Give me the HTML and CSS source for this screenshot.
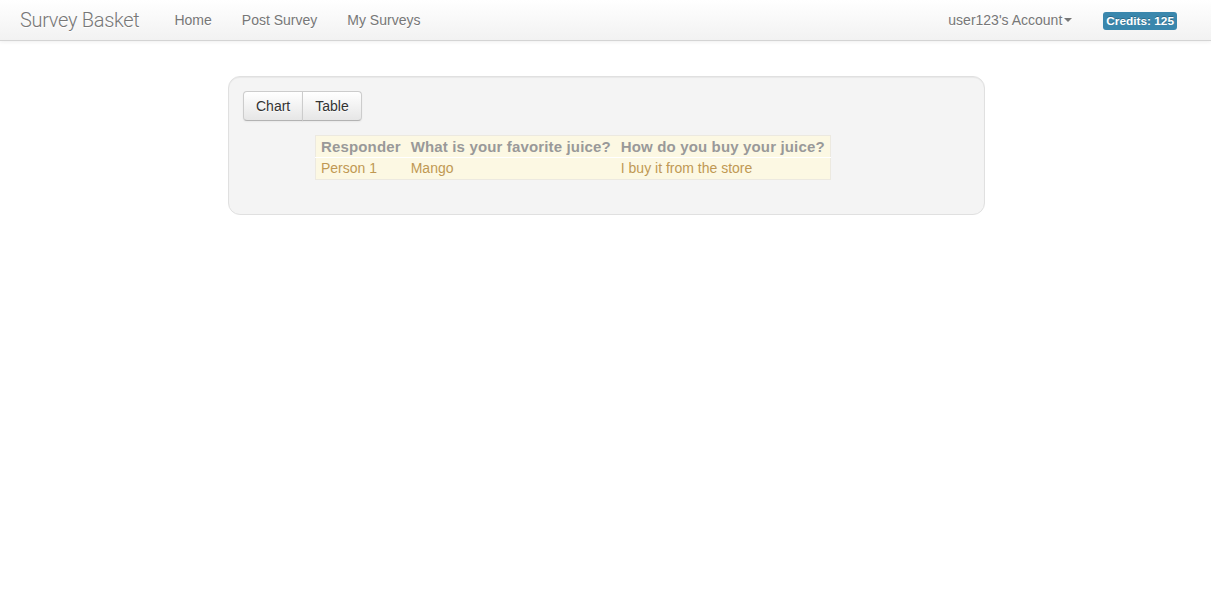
FILE: index.html
```html
<!DOCTYPE html>
<html>
<head>
<meta charset="utf-8">
<title>Survey Basket</title>
<link rel="stylesheet" href="styles.css">
</head>
<body>
<div class="navbar">
  <a class="brand" href="#">Survey Basket</a>
  <ul class="nav">
    <li><a href="#">Home</a></li>
    <li><a href="#">Post Survey</a></li>
    <li><a href="#">My Surveys</a></li>
  </ul>
  <ul class="nav nav-right">
    <li><a href="#">user123's Account<b class="caret"></b></a></li>
    <li class="credits"><span class="label">Credits: 125</span></li>
  </ul>
</div>
<div class="well">
  <div class="btn-group">
    <button class="btn">Chart</button><button class="btn">Table</button>
  </div>
  <table class="results">
    <thead>
      <tr><th>Responder</th><th>What is your favorite juice?</th><th>How do you buy your juice?</th></tr>
    </thead>
    <tbody>
      <tr><td>Person 1</td><td>Mango</td><td>I buy it from the store</td></tr>
    </tbody>
  </table>
</div>
</body>
</html>
```
FILE: styles.css
```css
html, body {
  margin: 0;
  padding: 0;
  background: #fff;
  font-family: "Liberation Sans", Arial, sans-serif;
  font-size: 14px;
  line-height: 20px;
  color: #333;
}
.navbar {
  display: flex;
  align-items: flex-start;
  height: 40px;
  padding: 0 20px;
  background: linear-gradient(to bottom, #ffffff, #f2f2f2);
  border-bottom: 1px solid #d4d4d4;
  box-shadow: 0 1px 4px rgba(0,0,0,0.065);
}
.brand {
  display: block;
  padding: 10px 20px;
  margin-left: -20px;
  font-family: Roboto, "Liberation Sans", sans-serif;
  font-weight: 300;
  font-size: 20px;
  line-height: 20px;
  letter-spacing: -0.3px;
  color: #777;
  text-decoration: none;
  text-shadow: 0 1px 0 #fff;
}
.nav {
  display: flex;
  list-style: none;
  margin: 0;
  padding: 0;
}
.nav a {
  display: block;
  padding: 10px 15px;
  color: #777;
  text-decoration: none;
  text-shadow: 0 1px 0 #fff;
}
.nav-right {
  margin-left: auto;
  margin-right: 14px;
}
.caret {
  display: inline-block;
  width: 0;
  height: 0;
  margin-left: 2px;
  vertical-align: top;
  margin-top: 8px;
  border-top: 4px solid #777;
  border-left: 4px solid transparent;
  border-right: 4px solid transparent;
}
.credits {
  padding: 12px 0 0 16px;
}
.label {
  display: block;
  padding: 2px 3px;
  font-size: 11.844px;
  font-weight: bold;
  line-height: 14px;
  color: #fff;
  background: #3a87ad;
  border-radius: 3px;
  text-shadow: 0 -1px 0 rgba(0,0,0,0.25);
}
.well {
  box-sizing: border-box;
  width: 757px;
  margin: 35px 0 0 calc(50% - 377.5px);
  padding: 14px;
  background: #f4f4f4;
  border: 1px solid #e0e0e0;
  border-radius: 12px;
  box-shadow: inset 0 1px 1px rgba(0,0,0,0.05);
}
.btn-group {
  display: flex;
}
.btn {
  padding: 4px 12px;
  font-family: inherit;
  font-size: 14px;
  line-height: 20px;
  color: #333;
  background: linear-gradient(to bottom, #ffffff, #e6e6e6);
  border: 1px solid #cccccc;
  border-bottom-color: #b3b3b3;
  box-shadow: inset 0 1px 0 rgba(255,255,255,0.2), 0 1px 2px rgba(0,0,0,0.05);
  text-shadow: 0 1px 1px rgba(255,255,255,0.75);
  cursor: pointer;
}
.btn:first-child {
  border-radius: 4px 0 0 4px;
}
.btn:last-child {
  margin-left: -1px;
  border-radius: 0 4px 4px 0;
}
.results {
  margin: 14px 0 20px 72px;
  border-collapse: collapse;
  border: 1px solid #ece9e0;
  background: #fcf8e3;
}
.results th, .results td {
  text-align: left;
  white-space: nowrap;
}
.results th {
  padding: 1px 5px 0;
  color: #999;
  font-size: 15px;
  font-weight: bold;
  letter-spacing: 0.15px;
  border-bottom: 1px solid #fff;
}
.results td {
  color: #c09853;
  padding: 0 5px 1px;
}
```
